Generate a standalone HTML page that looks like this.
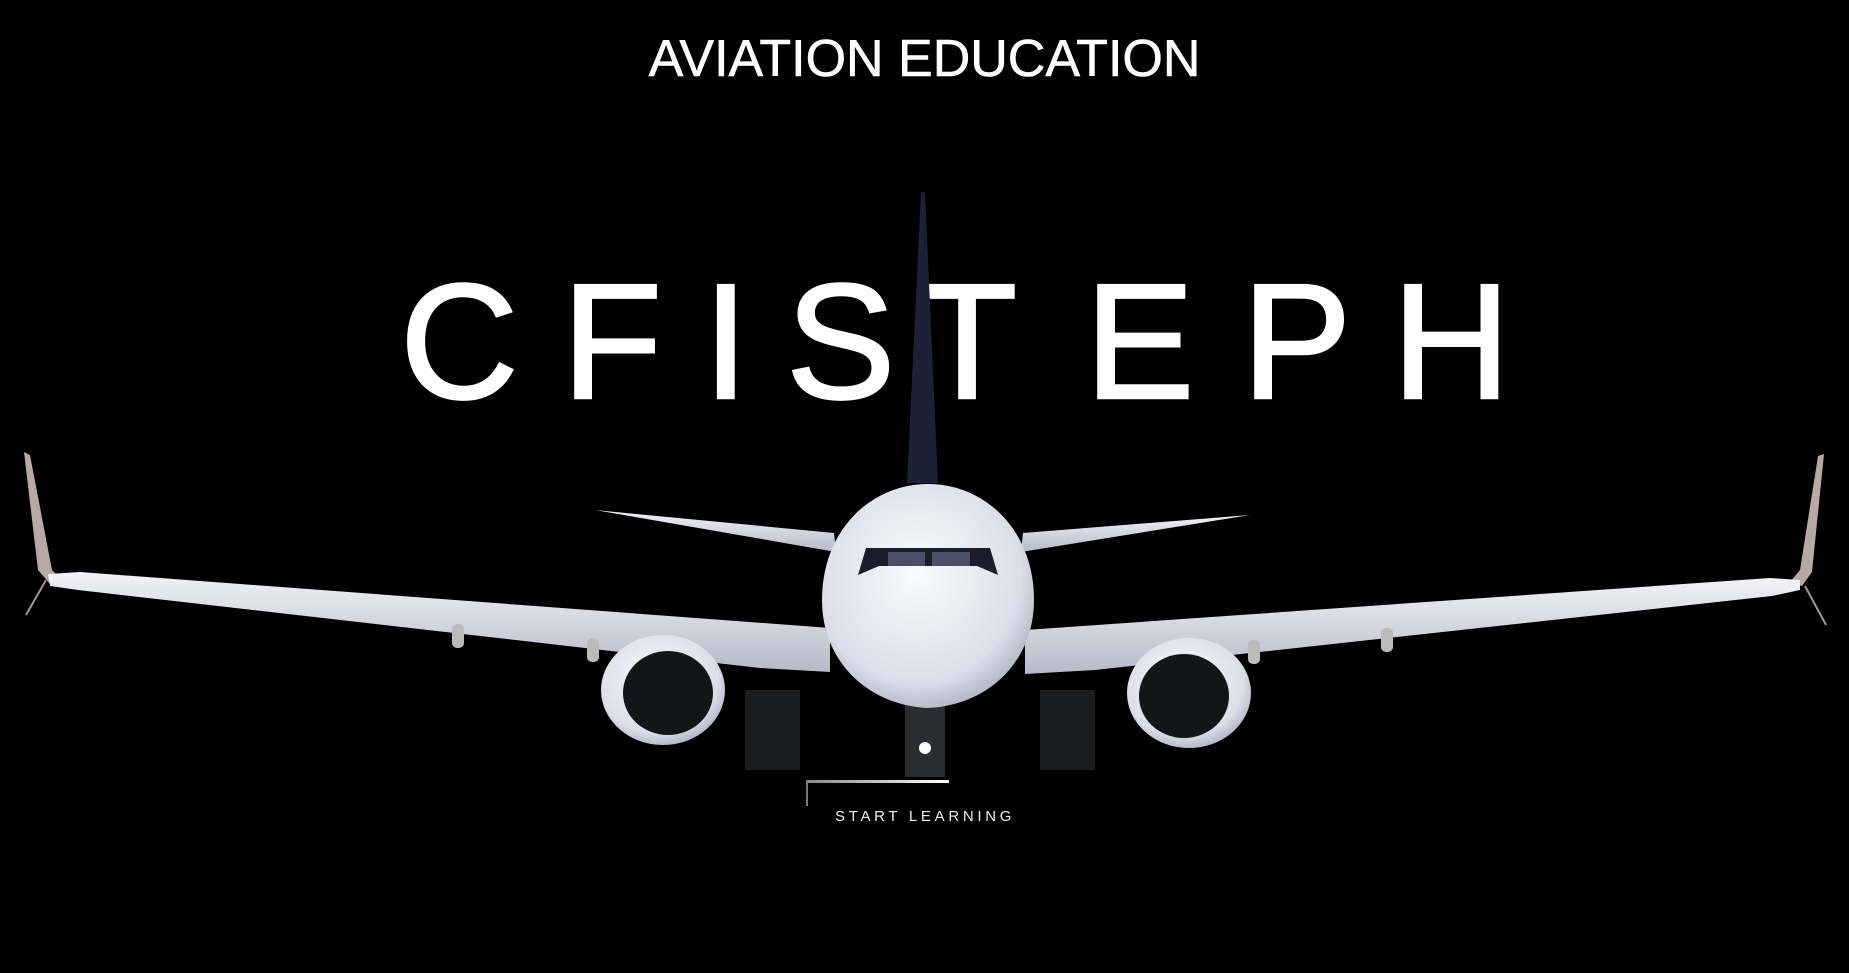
<!DOCTYPE html>
<html><head><meta charset="utf-8"><style>
html,body{margin:0;padding:0;background:#000;width:1849px;height:973px;overflow:hidden;font-family:"Liberation Sans",sans-serif}
.t{position:absolute;left:0;width:1849px;top:29px;text-align:center;color:#fff;font-size:52px;-webkit-text-stroke:0.6px #fff}
.L{position:absolute;top:260px;color:#fff;font-size:164px;line-height:164px;font-weight:normal;-webkit-text-stroke:2.5px #fff}
svg{position:absolute;left:0;top:0}
.sl{position:absolute;left:835px;top:808px;color:#eee;font-size:15px;letter-spacing:3.7px}
</style></head><body>
<div class="t">AVIATION EDUCATION</div>
<div class="L" style="left:400px">C</div>
<div class="L" style="left:562px">F</div>
<div class="L" style="left:703px">I</div>
<div class="L" style="left:786px">S</div>
<div class="L" style="left:917px">T</div>
<div class="L" style="left:1085px">E</div>
<div class="L" style="left:1242px">P</div>
<div class="L" style="left:1392px">H</div>
<svg width="1849" height="973" viewBox="0 0 1849 973">
<defs>
<radialGradient id="fg" cx="0.45" cy="0.4" r="0.7"><stop offset="0" stop-color="#fafbff"/><stop offset="0.7" stop-color="#dcdde8"/><stop offset="1" stop-color="#9a9cab"/></radialGradient>
<linearGradient id="wg" x1="0" y1="0" x2="0" y2="1"><stop offset="0" stop-color="#f2f2f8"/><stop offset="1" stop-color="#b8b9c6"/></linearGradient>
<linearGradient id="ln" x1="0" x2="1"><stop offset="0" stop-color="#888"/><stop offset="1" stop-color="#fff"/></linearGradient>
</defs>
<path d="M921 192 L925 192 L938 483 L907 483 Z" fill="#1c2135"/>
<path d="M595 510 L834 533 L836 552 Z" fill="url(#wg)"/>
<path d="M1250 515 L1023 533 L1021 552 Z" fill="url(#wg)"/>
<path d="M24 452 L30 455 L52 570 L62 580 L50 584 L38 570 Z" fill="#b8a8a8"/>
<path d="M1824 454 L1818 456 L1800 570 L1790 582 L1802 586 L1812 572 Z" fill="#b8a8a8"/>
<path d="M46 580 L26 615" stroke="#999" stroke-width="2"/>
<path d="M1805 586 L1826 625" stroke="#999" stroke-width="2"/>
<path d="M48 574 L80 572 L830 628 L830 672 L760 668 L78 590 L50 586 Z" fill="url(#wg)"/>
<path d="M1800 580 L1770 578 L1025 630 L1025 674 L1095 670 L1772 596 L1800 590 Z" fill="url(#wg)"/>
<rect x="452" y="624" width="12" height="24" rx="5" fill="#bbb"/>
<rect x="587" y="638" width="12" height="24" rx="5" fill="#bbb"/>
<rect x="1248" y="640" width="12" height="24" rx="5" fill="#bbb"/>
<rect x="1381" y="628" width="12" height="24" rx="5" fill="#bbb"/>
<rect x="745" y="690" width="55" height="80" fill="#1a1c1e"/>
<rect x="1040" y="690" width="55" height="80" fill="#1a1c1e"/>
<rect x="905" y="705" width="40" height="72" fill="#2a2c2e"/>
<circle cx="925" cy="748" r="6" fill="#fff"/>
<ellipse cx="663" cy="690" rx="62" ry="55" fill="url(#fg)"/>
<ellipse cx="668" cy="693" rx="45" ry="42" fill="#141518"/>
<ellipse cx="1189" cy="693" rx="62" ry="55" fill="url(#fg)"/>
<ellipse cx="1184" cy="696" rx="45" ry="42" fill="#141518"/>
<path d="M928 484 C985 484 1034 530 1034 600 C1034 660 990 705 928 708 C866 705 822 660 822 600 C822 530 871 484 928 484 Z" fill="url(#fg)"/>
<path d="M866 548 L990 548 L998 575 L977 566 L879 566 L858 575 Z" fill="#1b1e2a"/>
<path d="M888 552 L925 552 L925 566 L888 566 Z M932 552 L970 552 L970 566 L932 566 Z" fill="#4a5068"/>
<rect x="806" y="780" width="143" height="3" fill="url(#ln)"/>
<rect x="806" y="780" width="2" height="26" fill="#777"/>
</svg>
<div class="sl">START LEARNING</div>
</body></html>
